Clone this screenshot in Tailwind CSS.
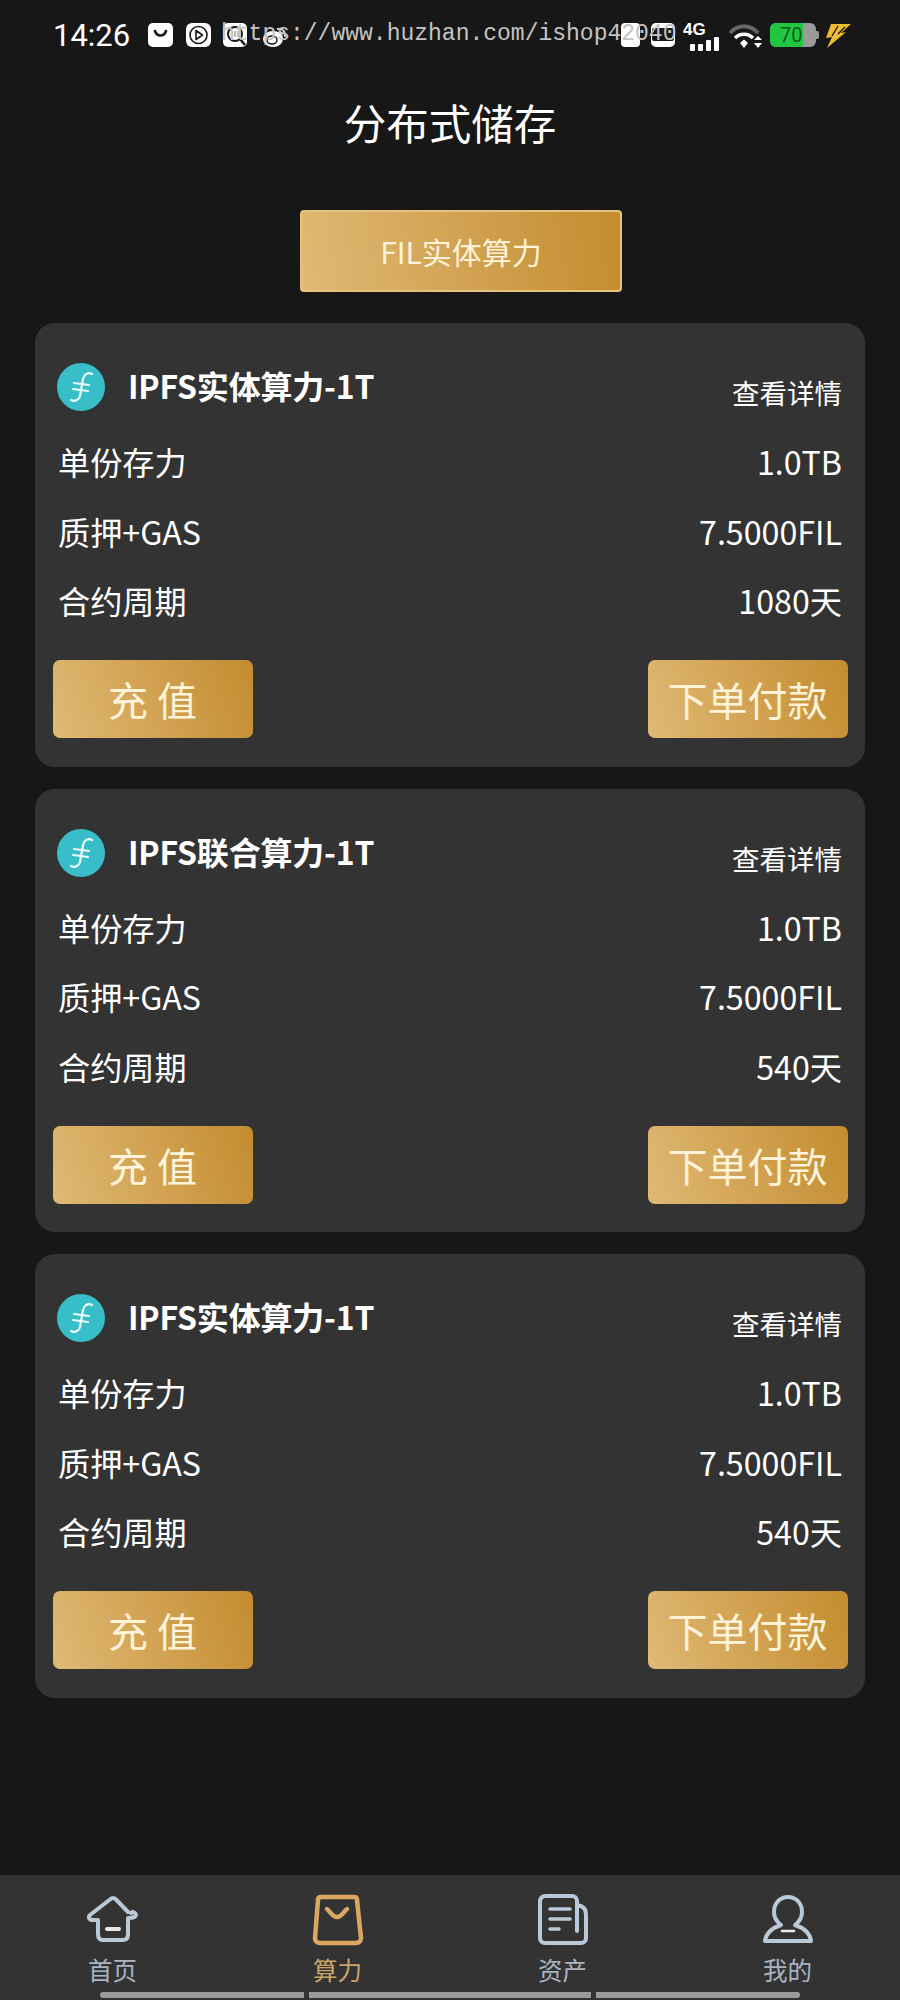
<!DOCTYPE html>
<html lang="zh-CN">
<head>
    <meta charset="UTF-8">
    <meta name="viewport" content="width=device-width, initial-scale=1.0">
    <title>分布式储存</title>
    <script src="https://cdn.jsdelivr.net/npm/@tailwindcss/browser@4"></script>
</head>
<body class="bg-[#171717] font-['Noto_Sans_CJK_SC',sans-serif] text-white">

<div class="relative h-[2000px] w-[900px] flex flex-col overflow-hidden">

    <!-- Status bar -->
    <div class="h-[66px] flex items-start pt-[23px] pl-[53px]">
        <span class="font-['Roboto',sans-serif] text-[31px] leading-[25px] w-[95px]">14:26</span>
        <svg class="w-[25px] h-[24px]" viewBox="0 0 25 24"><rect width="25" height="24" rx="5" fill="#fff"/><path d="M7 8c2 6 9 6 11 0" fill="none" stroke="#171717" stroke-width="2.6" stroke-linecap="round"/></svg>
        <svg class="ml-[13px] w-[25px] h-[24px]" viewBox="0 0 25 24"><rect width="25" height="24" rx="6" fill="#fff"/><circle cx="12.5" cy="12" r="8.5" fill="none" stroke="#171717" stroke-width="1.6"/><path d="M10 7.5l6.500 4.500-6.500 4.500z" fill="none" stroke="#171717" stroke-width="1.6" stroke-linejoin="round"/></svg>
        <svg class="ml-[12px] w-[25px] h-[25px]" viewBox="0 0 25 25"><rect width="24" height="24" rx="5" fill="#fff"/><circle cx="12" cy="11" r="7" fill="none" stroke="#171717" stroke-width="2"/><path d="M17 16l5 6" stroke="#171717" stroke-width="2.500"/><path d="M9 8v6M12 8v6M15 8v6" stroke="#777" stroke-width="1"/></svg>
        <svg class="ml-[14px] mt-[3px] w-[26px] h-[22px]" viewBox="0 0 26 22"><ellipse cx="11" cy="13" rx="10" ry="8" fill="#fff"/><ellipse cx="10" cy="14" rx="5" ry="4" fill="none" stroke="#171717" stroke-width="1.500"/><path d="M15 3c5-1 9 2 8 8M16 7c3-.5 4 1 3.500 3.500" fill="none" stroke="#ddd" stroke-width="1.800"/></svg>
        <svg class="ml-[333px] w-[19px] h-[24px]" viewBox="0 0 19 24"><rect width="19" height="24" rx="4" fill="#fff"/></svg>
        <svg class="ml-[11px] w-[24px] h-[24px]" viewBox="0 0 24 24"><rect width="24" height="24" rx="5" fill="#fff"/><rect x="1" y="5" width="22" height="13" rx="2" fill="#171717"/></svg>
        <div class="ml-[8px] w-[40px] h-[26px] relative">
            <span class="absolute left-0 top-[-3px] font-['Liberation_Sans',sans-serif] font-bold text-[17px] leading-[20px]">4G</span>
            <div class="absolute left-[7px] bottom-[-2px] flex items-end gap-[3px]">
                <span class="w-[5px] h-[7px] bg-white rounded-[1px]"></span>
                <span class="w-[5px] h-[7px] bg-white rounded-[1px]"></span>
                <span class="w-[5px] h-[11px] bg-white rounded-[1px]"></span>
                <span class="w-[5px] h-[14px] bg-white rounded-[1px]"></span>
            </div>
        </div>
        <svg class="ml-[6px] w-[34px] h-[26px]" viewBox="0 0 34 26"><path d="M1 10c8-9 20-9 28 0" fill="none" stroke="#666" stroke-width="4"/><path d="M6 15c5-5 13-5 18 0" fill="none" stroke="#fff" stroke-width="3.500"/><path d="M11 20l4-3.500 4 3.500-4 5z" fill="#fff"/><path d="M25 17l4-4 4 4zM25 20h8l-4 5z" fill="#fff"/></svg>
        <div class="ml-[7px] relative w-[46px] h-[24px]">
            <div class="w-[46px] h-[24px] rounded-[6px] bg-[#9a9a9a] overflow-hidden">
                <div class="h-full w-[33px] bg-[#22c740] rounded-r-[2px]"></div>
            </div>
            <span class="absolute left-[10px] top-0 font-['Roboto',sans-serif] text-[20px] leading-[24px] text-[#0d5c1e]">70</span>
            <span class="absolute right-[-3px] top-[8px] w-[3px] h-[8px] rounded-r-[2px] bg-[#9a9a9a]"></span>
        </div>
        <svg class="ml-[8px] w-[28px] h-[26px]" viewBox="0 0 28 26"><path d="M7 1h20L17 10l5-1L3 25l5-11-6 1z" fill="#efbb2f"/><path d="M14 3L8 13M21 4l-7 7" stroke="#171717" stroke-width="1.400"/></svg>
    </div>

    <!-- watermark sits over the status icons -->
    <div class="absolute left-[221px] top-[20px] font-['Liberation_Mono',monospace] text-[23px] leading-[28px] text-[#c4c4c4] pointer-events-none">https://www.huzhan.com/ishop42040</div>

    <!-- Page title -->
    <h1 class="h-[78px] text-center text-[42.5px] leading-[112px]">分布式储存</h1>

    <!-- Tab -->
    <button class="mt-[66px] ml-[300px] w-[322px] h-[82px] rounded-[4px] border-2 border-[#e6c27f] bg-[linear-gradient(80deg,#e0b976,#c38c2e)] text-[30px] text-[#fff3d9]">FIL实体算力</button>

    <!-- Product list -->
    <div id="list" class="mt-[31px] mx-[35px] flex flex-col gap-[22px]">

        <div class="h-[443.5px] rounded-[20px] bg-[#333333] pt-[40px] flex flex-col">
            <div class="h-[48px] pl-[22px] pr-[23px] flex items-center">
                <svg class="w-[48px] h-[48px]" viewBox="0 0 48 48"><circle cx="24" cy="24" r="24" fill="#37bec8"/><path d="M35 11c-4-2-8 0-9 5l-3 17c-1 4-5 6-9 4M17 20l15 2M16 26l15 2" fill="none" stroke="#eefcfc" stroke-width="2.200" stroke-linecap="round"/></svg>
                <span class="ml-[23px] mb-[4px] text-[32px] tracking-[-0.2px] font-bold">IPFS实体算力-1T</span>
                <span class="ml-auto mt-[12px] text-[27.5px]">查看详情</span>
            </div>
            <div class="mt-[15.5px] px-[23px]">
                <div class="h-[69.5px] flex items-center justify-between text-[32.2px]"><span>单份存力</span><span>1.0TB</span></div>
                <div class="h-[69.5px] flex items-center justify-between text-[32.2px]"><span>质押+GAS</span><span>7.5000FIL</span></div>
                <div class="h-[69.5px] flex items-center justify-between text-[32.2px]"><span>合约周期</span><span>1080天</span></div>
            </div>
            <div class="mt-[25px] px-[17.5px] flex justify-between">
                <button class="w-[200px] h-[78px] rounded-[7px] bg-[linear-gradient(70deg,#e0b976,#c38c2e)] text-[40px] text-[#fff3d9]">充 值</button>
                <button class="w-[200px] h-[78px] rounded-[7px] bg-[linear-gradient(70deg,#e0b976,#c38c2e)] text-[40px] text-[#fff3d9]">下单付款</button>
            </div>
        </div>

        <div class="h-[443.5px] rounded-[20px] bg-[#333333] pt-[40px] flex flex-col">
            <div class="h-[48px] pl-[22px] pr-[23px] flex items-center">
                <svg class="w-[48px] h-[48px]" viewBox="0 0 48 48"><circle cx="24" cy="24" r="24" fill="#37bec8"/><path d="M35 11c-4-2-8 0-9 5l-3 17c-1 4-5 6-9 4M17 20l15 2M16 26l15 2" fill="none" stroke="#eefcfc" stroke-width="2.200" stroke-linecap="round"/></svg>
                <span class="ml-[23px] mb-[4px] text-[32px] tracking-[-0.2px] font-bold">IPFS联合算力-1T</span>
                <span class="ml-auto mt-[12px] text-[27.5px]">查看详情</span>
            </div>
            <div class="mt-[15.5px] px-[23px]">
                <div class="h-[69.5px] flex items-center justify-between text-[32.2px]"><span>单份存力</span><span>1.0TB</span></div>
                <div class="h-[69.5px] flex items-center justify-between text-[32.2px]"><span>质押+GAS</span><span>7.5000FIL</span></div>
                <div class="h-[69.5px] flex items-center justify-between text-[32.2px]"><span>合约周期</span><span>540天</span></div>
            </div>
            <div class="mt-[25px] px-[17.5px] flex justify-between">
                <button class="w-[200px] h-[78px] rounded-[7px] bg-[linear-gradient(70deg,#e0b976,#c38c2e)] text-[40px] text-[#fff3d9]">充 值</button>
                <button class="w-[200px] h-[78px] rounded-[7px] bg-[linear-gradient(70deg,#e0b976,#c38c2e)] text-[40px] text-[#fff3d9]">下单付款</button>
            </div>
        </div>

        <div class="h-[443.5px] rounded-[20px] bg-[#333333] pt-[40px] flex flex-col">
            <div class="h-[48px] pl-[22px] pr-[23px] flex items-center">
                <svg class="w-[48px] h-[48px]" viewBox="0 0 48 48"><circle cx="24" cy="24" r="24" fill="#37bec8"/><path d="M35 11c-4-2-8 0-9 5l-3 17c-1 4-5 6-9 4M17 20l15 2M16 26l15 2" fill="none" stroke="#eefcfc" stroke-width="2.200" stroke-linecap="round"/></svg>
                <span class="ml-[23px] mb-[4px] text-[32px] tracking-[-0.2px] font-bold">IPFS实体算力-1T</span>
                <span class="ml-auto mt-[12px] text-[27.5px]">查看详情</span>
            </div>
            <div class="mt-[15.5px] px-[23px]">
                <div class="h-[69.5px] flex items-center justify-between text-[32.2px]"><span>单份存力</span><span>1.0TB</span></div>
                <div class="h-[69.5px] flex items-center justify-between text-[32.2px]"><span>质押+GAS</span><span>7.5000FIL</span></div>
                <div class="h-[69.5px] flex items-center justify-between text-[32.2px]"><span>合约周期</span><span>540天</span></div>
            </div>
            <div class="mt-[25px] px-[17.5px] flex justify-between">
                <button class="w-[200px] h-[78px] rounded-[7px] bg-[linear-gradient(70deg,#e0b976,#c38c2e)] text-[40px] text-[#fff3d9]">充 值</button>
                <button class="w-[200px] h-[78px] rounded-[7px] bg-[linear-gradient(70deg,#e0b976,#c38c2e)] text-[40px] text-[#fff3d9]">下单付款</button>
            </div>
        </div>
    </div>

    <!-- Bottom tab bar -->
    <nav class="relative mt-auto h-[125px] bg-[#333333] grid grid-cols-4">
        <div class="flex flex-col items-center pt-[19px]">
            <svg class="w-[52px] h-[52px]" viewBox="0 0 52 52" fill="none" stroke="#b9c9d8" stroke-width="4" stroke-linecap="round" stroke-linejoin="round"><path d="M41 18L29 5.500c-2-2-4-2-6 0L3 21c-2 2-1 5 3 5h5v14c0 4 2 6 5 6h20c3 0 5-2 5-6V24c4 0 8-1 8-3s-3-4-5-2"/><path d="M20 35h12" stroke="#e8e8e8"/></svg>
            <span class="mt-[7px] text-[24.5px] leading-[34px] text-[#aab5c0]">首页</span>
        </div>
        <div class="flex flex-col items-center pt-[19px]">
            <svg class="w-[52px] h-[52px]" viewBox="0 0 52 52" fill="none" stroke="#dba862" stroke-width="4.500" stroke-linecap="round" stroke-linejoin="round"><path d="M6 6c0-2 1-3 3-3h33c2 0 3 1 3 3l4 38c0 3-2 5-5 5H8c-3 0-5-2-5-5z"/><path d="M15 15c3 2 5 8 10 8s7-6 10-8"/></svg>
            <span class="mt-[7px] text-[24.5px] leading-[34px] text-[#cba468]">算力</span>
        </div>
        <div class="flex flex-col items-center pt-[19px]">
            <svg class="w-[52px] h-[52px]" viewBox="0 0 52 52" fill="none" stroke="#b9c9d8" stroke-width="4" stroke-linecap="round" stroke-linejoin="round"><path d="M40 37V7c0-3-2-5-5-5H9C5 2 3 4 3 8v36c0 3 2 5 5 5h36c3 0 5-2 5-5V20c0-5-3-8-9-9"/><path d="M13 15h20M13 25h20M13 35h9" stroke-width="3.500"/></svg>
            <span class="mt-[7px] text-[24.5px] leading-[34px] text-[#aab5c0]">资产</span>
        </div>
        <div class="flex flex-col items-center pt-[19px]">
            <svg class="w-[52px] h-[52px]" viewBox="0 0 52 52" fill="none" stroke="#b9c9d8" stroke-width="4" stroke-linecap="round" stroke-linejoin="round"><path d="M19 31c-4-3-7-8-7-13C12 9 18 3 26 3s14 6 14 15c0 5-3 10-7 13 9 3 15 8 16 16H3c1-8 7-13 16-16z"/><path d="M20 37h12" stroke="#e8e8e8" stroke-width="2.500"/></svg>
            <span class="mt-[7px] text-[24.5px] leading-[34px] text-[#aab5c0]">我的</span>
        </div>
        <!-- home gesture bars over the tab bar -->
        <div class="absolute left-[100px] top-[117px] flex gap-[5px]">
            <span class="block w-[204px] h-[6px] bg-[#9b9b9b] rounded-l-[3px]"></span>
            <span class="block w-[282px] h-[6px] bg-[#9b9b9b]"></span>
            <span class="block w-[204px] h-[6px] bg-[#9b9b9b] rounded-r-[3px]"></span>
        </div>
    </nav>
</div>

</body>
</html>
